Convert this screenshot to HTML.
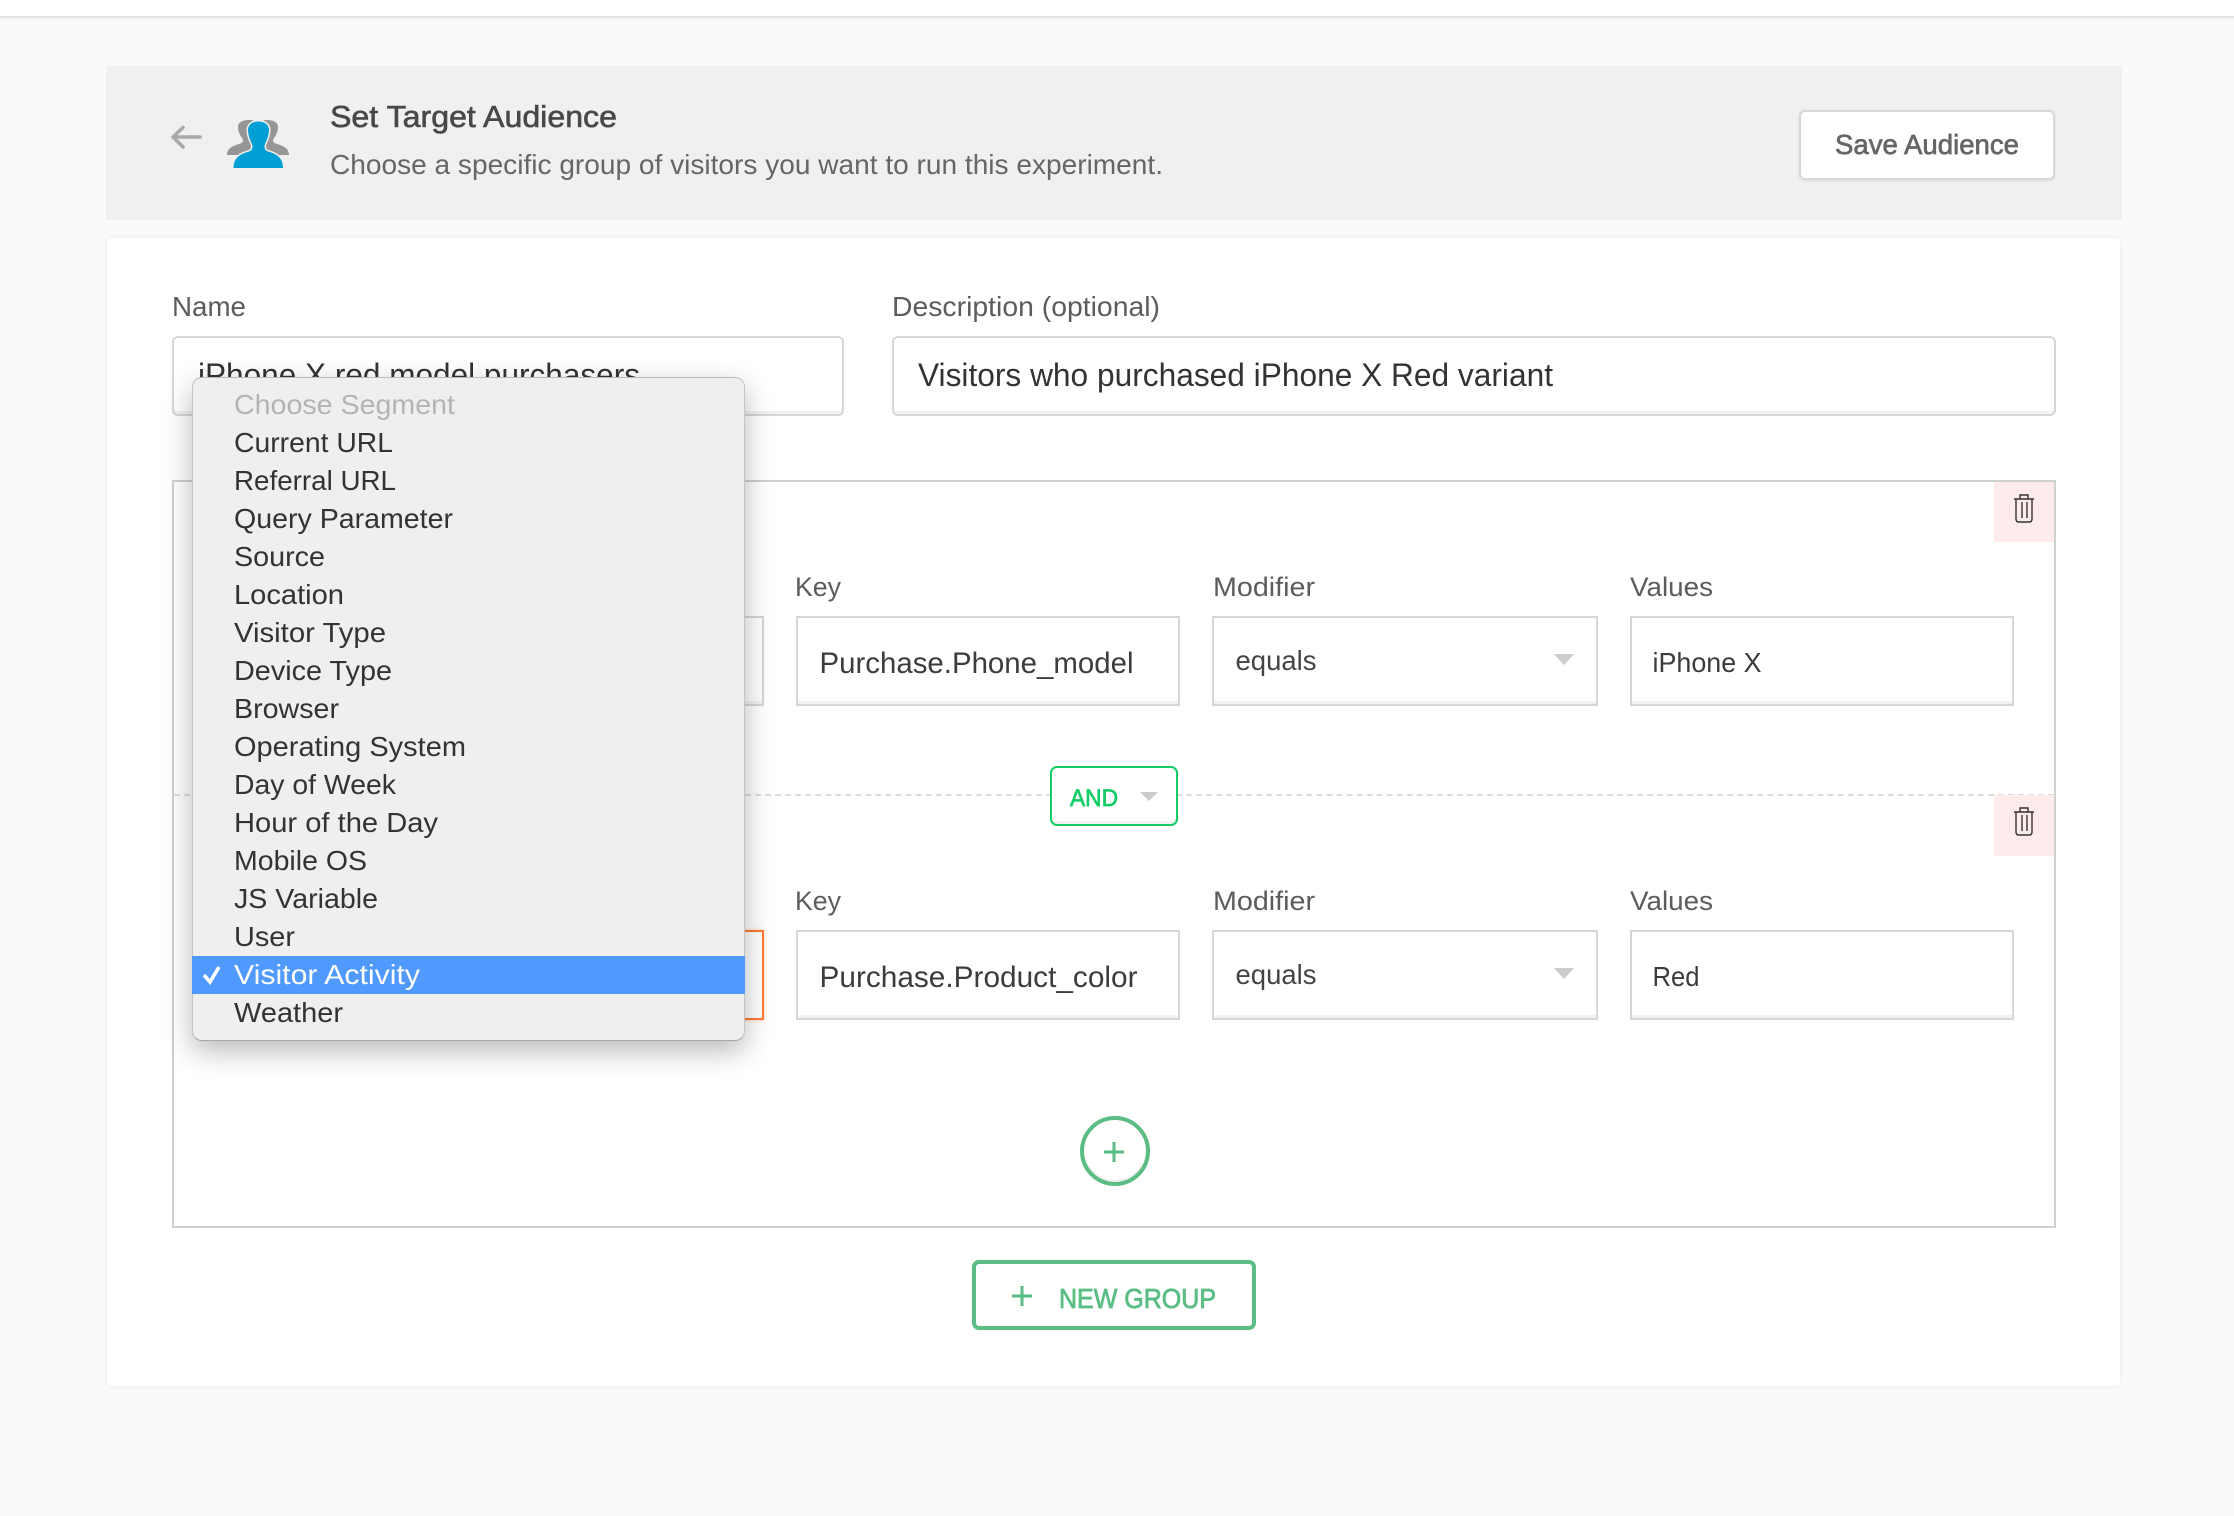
<!DOCTYPE html>
<html lang="en"><head><meta charset="utf-8"><title>Set Target Audience</title>
<style>
html,body{margin:0;padding:0}
body{width:2234px;height:1516px;position:relative;overflow:hidden;background:#fafafa;font-family:"Liberation Sans",sans-serif}
.b{position:absolute;box-sizing:border-box}
svg{position:absolute;left:0;top:0}
text{font-family:"Liberation Sans",sans-serif}
.inp{background:#fff;border:2px solid #d6d6d6;box-shadow:inset 0 -3px 0 #f2f2f2}
.rd{border-radius:6px}
</style></head><body>
<div class="b" style="left:0;top:0;width:2234px;height:18px;background:#fff;border-bottom:2px solid #e4e4e4;box-shadow:0 1px 2px rgba(0,0,0,.04)"></div>
<div class="b" style="left:106px;top:66px;width:2016px;height:154px;background:#f0f0f0"></div>
<div class="b" style="left:1799px;top:110px;width:256px;height:70px;background:#fff;border:2px solid #d8d8d8;border-radius:6px;box-shadow:0 1px 3px rgba(0,0,0,.08)"></div>
<div class="b" style="left:107px;top:238px;width:2013px;height:1148px;background:#fff;border-radius:4px;box-shadow:0 0 6px rgba(0,0,0,.07)"></div>
<div class="b inp rd" style="left:172px;top:336px;width:672px;height:80px"></div>
<div class="b inp rd" style="left:892px;top:336px;width:1164px;height:80px"></div>
<div class="b" style="left:172px;top:480px;width:1884px;height:748px;border:2px solid #d0d0d0;border-top:0"></div>
<div class="b" style="left:172px;top:480px;width:1884px;height:2px;background:#d0d0d0"></div>
<div class="b" style="left:174px;top:794px;width:1880px;height:0;border-top:2px dashed #dcdcdc"></div>
<div class="b" style="left:1994px;top:482px;width:60px;height:60px;background:#feecec"></div>
<div class="b" style="left:1994px;top:795px;width:60px;height:61px;background:#feecec"></div>
<div class="b inp" style="left:200px;top:616px;width:564px;height:90px"></div>
<div class="b inp" style="left:796px;top:616px;width:384px;height:90px"></div>
<div class="b inp" style="left:1212px;top:616px;width:386px;height:90px"></div>
<div class="b inp" style="left:1630px;top:616px;width:384px;height:90px"></div>
<div class="b" style="left:200px;top:930px;width:564px;height:90px;background:#fff;border:2px solid #ff7a35;box-shadow:0 0 4px rgba(255,122,53,.35)"></div>
<div class="b inp" style="left:796px;top:930px;width:384px;height:90px"></div>
<div class="b inp" style="left:1212px;top:930px;width:386px;height:90px"></div>
<div class="b inp" style="left:1630px;top:930px;width:384px;height:90px"></div>
<div class="b" style="left:1050px;top:766px;width:128px;height:60px;background:#fff;border:2px solid #12cc66;border-radius:7px;box-shadow:inset 0 -3px 0 #f2f2f2"></div>
<div class="b" style="left:1080px;top:1116px;width:70px;height:70px;background:#fff;border:4px solid #5bbd84;border-radius:50%;box-shadow:inset 0 -2px 1px #eee"></div>
<div class="b" style="left:972px;top:1260px;width:284px;height:70px;background:#fff;border:4px solid #5bbd84;border-radius:7px"></div>

<svg width="2234" height="1516" viewBox="0 0 2234 1516" xmlns="http://www.w3.org/2000/svg">
<path d="M173 137H200M183 127.5L173 137L183 147" fill="none" stroke="#a9a9a9" stroke-width="3.6" stroke-linecap="round" stroke-linejoin="round"/>
<g fill="#969696">
<path d="M227 155C227 149 232 146 239 144C243 143 244 141 242 138C239 134 238 130 238 127C238 122 243 120 249 120C256 120 262 123 262 130V155Z"/>
<path d="M289 155C289 149 284 146 277 144C273 143 272 141 274 138C277 134 278 130 278 127C278 122 273 120 267 120C260 120 254 123 254 130V155Z"/>
</g>
<path d="M233.5 168C233.5 158 240 154 249 151.5C252.5 150.5 253 147 252 144C249.5 139 248 134 248 130C248 125 252 121.5 258.5 121.5C265 121.5 269 125 269 130C269 134 267.5 139 265 144C264 147 264.5 150.5 268 151.5C277 154 283 158 283 168Z" fill="#009fd6" stroke="#f0f0f0" stroke-width="3" paint-order="stroke"/>

<text x="330" y="127" font-size="31" fill="#484848" stroke="#484848" stroke-width=".6" textLength="287" lengthAdjust="spacingAndGlyphs">Set Target Audience</text>
<text x="330" y="174" font-size="28" fill="#666" textLength="833" lengthAdjust="spacingAndGlyphs">Choose a specific group of visitors you want to run this experiment.</text>
<text x="1835" y="154" font-size="28" fill="#666" stroke="#666" stroke-width=".7" textLength="184" lengthAdjust="spacingAndGlyphs">Save Audience</text>
<text x="172" y="316" font-size="28" fill="#5c5c5c" textLength="74" lengthAdjust="spacingAndGlyphs">Name</text>
<text x="892" y="316" font-size="28" fill="#5c5c5c" textLength="268" lengthAdjust="spacingAndGlyphs">Description (optional)</text>
<text x="198" y="386" font-size="32" fill="#333" textLength="442" lengthAdjust="spacingAndGlyphs">iPhone X red model purchasers</text>
<text x="918" y="386" font-size="32" fill="#333" textLength="635" lengthAdjust="spacingAndGlyphs">Visitors who purchased iPhone X Red variant</text>

<text x="795" y="596" font-size="27" fill="#5c5c5c" textLength="46" lengthAdjust="spacingAndGlyphs">Key</text>
<text x="1213" y="596" font-size="27" fill="#5c5c5c" textLength="102" lengthAdjust="spacingAndGlyphs">Modifier</text>
<text x="1630" y="596" font-size="27" fill="#5c5c5c" textLength="83" lengthAdjust="spacingAndGlyphs">Values</text>
<text x="795" y="910" font-size="27" fill="#5c5c5c" textLength="46" lengthAdjust="spacingAndGlyphs">Key</text>
<text x="1213" y="910" font-size="27" fill="#5c5c5c" textLength="102" lengthAdjust="spacingAndGlyphs">Modifier</text>
<text x="1630" y="910" font-size="27" fill="#5c5c5c" textLength="83" lengthAdjust="spacingAndGlyphs">Values</text>

<text x="819.5" y="673" font-size="30" fill="#3c3c3c" textLength="314" lengthAdjust="spacingAndGlyphs">Purchase.Phone_model</text>
<text x="1235.5" y="670" font-size="28" fill="#444" textLength="81" lengthAdjust="spacingAndGlyphs">equals</text>
<text x="1652.5" y="672" font-size="28" fill="#3c3c3c" textLength="109" lengthAdjust="spacingAndGlyphs">iPhone X</text>
<text x="819.5" y="987" font-size="30" fill="#3c3c3c" textLength="318" lengthAdjust="spacingAndGlyphs">Purchase.Product_color</text>
<text x="1235.5" y="984" font-size="28" fill="#444" textLength="81" lengthAdjust="spacingAndGlyphs">equals</text>
<text x="1652.5" y="986" font-size="28" fill="#3c3c3c" textLength="47" lengthAdjust="spacingAndGlyphs">Red</text>

<path d="M1554 654H1574L1564 665Z M1554 968H1574L1564 979Z M1140 792H1158L1149 801Z" fill="#cccccc"/>
<text x="1070" y="806" font-size="24" fill="#12cc66" stroke="#12cc66" stroke-width=".7" textLength="48" lengthAdjust="spacingAndGlyphs">AND</text>

<g fill="none" stroke="#333" stroke-width="1.4">
<path d="M2014 499H2034M2020 499V495H2028V499M2016 499V519Q2016 522 2019 522H2029Q2032 522 2032 519V499M2022 502V518M2027 502V518"/>
<path transform="translate(0 313)" d="M2014 499H2034M2020 499V495H2028V499M2016 499V519Q2016 522 2019 522H2029Q2032 522 2032 519V499M2022 502V518M2027 502V518"/>
</g>
<path d="M1104 1152H1124M1114 1142V1162" stroke="#5bbd84" stroke-width="3" fill="none"/>
<path d="M1012 1296H1032M1022 1286V1306" stroke="#5bbd84" stroke-width="3" fill="none"/>
<text x="1059" y="1308" font-size="28" fill="#5bbd84" stroke="#5bbd84" stroke-width=".8" textLength="157" lengthAdjust="spacingAndGlyphs">NEW GROUP</text>
</svg>

<div class="b" style="left:191.5px;top:377px;width:553.5px;height:664px;background:#efefef;border:1px solid #c4c4c4;border-top-color:#bbb;border-bottom-color:#a8a8a8;border-radius:10px;box-shadow:0 10px 28px rgba(0,0,0,.28)"></div>
<div class="b" style="left:192px;top:956px;width:553px;height:38px;background:#4f99ff"></div>
<svg width="2234" height="1516" viewBox="0 0 2234 1516" xmlns="http://www.w3.org/2000/svg">
<g font-size="28" fill="#333">
<text x="234" y="414" fill="#b4b4b4" textLength="221" lengthAdjust="spacingAndGlyphs">Choose Segment</text>
<text x="234" y="452" textLength="159" lengthAdjust="spacingAndGlyphs">Current URL</text>
<text x="234" y="490" textLength="162" lengthAdjust="spacingAndGlyphs">Referral URL</text>
<text x="234" y="528" textLength="219" lengthAdjust="spacingAndGlyphs">Query Parameter</text>
<text x="234" y="566" textLength="91" lengthAdjust="spacingAndGlyphs">Source</text>
<text x="234" y="604" textLength="110" lengthAdjust="spacingAndGlyphs">Location</text>
<text x="234" y="642" textLength="152" lengthAdjust="spacingAndGlyphs">Visitor Type</text>
<text x="234" y="680" textLength="158" lengthAdjust="spacingAndGlyphs">Device Type</text>
<text x="234" y="718" textLength="105" lengthAdjust="spacingAndGlyphs">Browser</text>
<text x="234" y="756" textLength="232" lengthAdjust="spacingAndGlyphs">Operating System</text>
<text x="234" y="794" textLength="162" lengthAdjust="spacingAndGlyphs">Day of Week</text>
<text x="234" y="832" textLength="204" lengthAdjust="spacingAndGlyphs">Hour of the Day</text>
<text x="234" y="870" textLength="133" lengthAdjust="spacingAndGlyphs">Mobile OS</text>
<text x="234" y="908" textLength="144" lengthAdjust="spacingAndGlyphs">JS Variable</text>
<text x="234" y="946" textLength="61" lengthAdjust="spacingAndGlyphs">User</text>
<text x="234" y="984" fill="#fff" textLength="186" lengthAdjust="spacingAndGlyphs">Visitor Activity</text>
<text x="234" y="1022" textLength="109" lengthAdjust="spacingAndGlyphs">Weather</text>
</g>
<path d="M204 975L210 982L219 967" fill="none" stroke="#fff" stroke-width="3.6"/>
</svg>
</body></html>
